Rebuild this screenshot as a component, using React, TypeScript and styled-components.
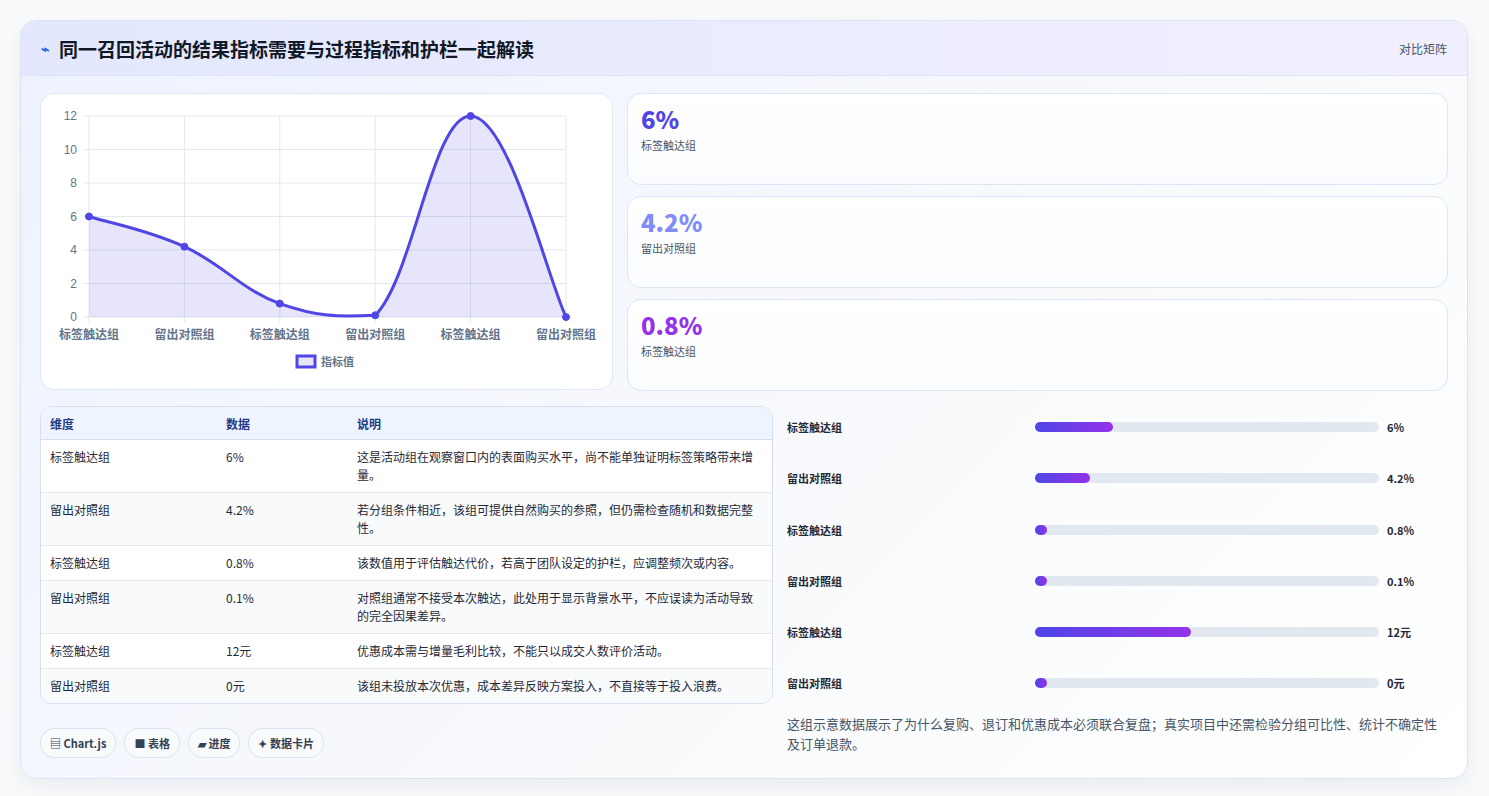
import React from "react";
import styled, { createGlobalStyle } from "styled-components";

const Global = createGlobalStyle`
  body { margin: 0; background: #f8fafc; font-family: "Noto Sans CJK SC", "Noto Sans", sans-serif; }
`;

const Page = styled.div`
  padding: 20px 21px 22px 20px;
  width: 1489px; box-sizing: border-box;
`;
const Card = styled.div`
  border: 1px solid #dbe3f4; border-radius: 16px; overflow: hidden;
  background: linear-gradient(135deg, #eef2ff 0%, #f8fafc 60%, #ffffff 100%);
  box-shadow: 0 8px 20px rgba(15,23,42,0.06);
`;
const Header = styled.div`
  height: 54px; display: flex; align-items: center; justify-content: space-between;
  padding: 0 20px; border-bottom: 1px solid #dde5f5;
  background: linear-gradient(90deg, #e3e8fe, #f1efff);
`;
const Title = styled.h1`
  margin: 0; font-size: 19px; font-weight: 700; color: #111827; display: flex; align-items: center; gap: 10px;
`;
const Icon = styled.span` color: #2563eb; font-size: 14px; `;
const HeadTag = styled.span` font-size: 12px; color: #475569; `;
const Body = styled.div` padding: 17px 19px 20px 19px; display: flex; flex-direction: column; gap: 15px; `;
const Row = styled.div` display: grid; grid-template-columns: 573px 1fr; gap: 14px; `;
const Row2 = styled.div` display: grid; grid-template-columns: 733px 1fr; gap: 14px; `;
const ChartBox = styled.div`
  height: 297px; box-sizing: border-box; background: #fff; border: 1px solid #e2e8f0; border-radius: 14px;
`;
const Stats = styled.div` display: flex; flex-direction: column; gap: 11px; `;
const Stat = styled.div`
  height: 92px; box-sizing: border-box; padding: 11px 13px; border: 1px solid #dde6f5; border-radius: 14px;
  background: linear-gradient(180deg, #ffffff, #fbfcff);
`;
const StatVal = styled.div<{ c: string }>` font-size: 24px; font-weight: 800; color: ${p => p.c}; line-height: 1.2; `;
const StatLbl = styled.div` font-size: 11px; color: #475569; margin-top: 3px; `;
const Left = styled.div` display: flex; flex-direction: column; gap: 24px; `;
const TableWrap = styled.div` border: 1px solid #d8dfea; border-radius: 12px; overflow: hidden; background: #fff; `;
const Table = styled.table`
  width: 100%; border-collapse: collapse; font-size: 12px; color: #1f2937;
  th { background: #eff5ff; color: #1e3a8a; text-align: left; font-weight: 600; height: 32px; padding: 0 9px; border-bottom: 1px solid #d8dfea; }
  td { padding: 8px 9px; vertical-align: top; line-height: 18px; border-bottom: 1px solid #e2e8f0; }
  tr:nth-child(even) td { background: #f8fafc; }
  tr:last-child td { border-bottom: none; }
`;
const Chips = styled.div` display: flex; gap: 8px; `;
const Chip = styled.span`
  font-size: 11px; font-weight: 600; color: #334155; padding: 6px 9px; border: 1px solid #dbe3ee; border-radius: 14px; background: #f8fafc;
`;
const Right = styled.div` display: flex; flex-direction: column; `;
const Bars = styled.div` display: flex; flex-direction: column; padding-top: 13px; `;
const BarRow = styled.div` height: 51.3px; display: grid; grid-template-columns: 248px 344px 1fr; align-items: start; `;
const BarLbl = styled.span` font-size: 11px; color: #1f2937; font-weight: 600; line-height: 16px; `;
const Track = styled.div` height: 10px; margin-top: 3px; background: #e2e8f0; border-radius: 5px; `;
const Fill = styled.div` height: 100%; min-width: 12px; border-radius: 5px; background: linear-gradient(90deg, #4f46e5, #9333ea); `;
const BarVal = styled.span` font-size: 11px; font-weight: 700; color: #1f2937; padding-left: 8px; line-height: 16px; `;
const Note = styled.p` margin: -13px 0 0; font-size: 13px; line-height: 20px; color: #475569; `;

const vals = [6, 4.2, 0.8, 0.1, 12, 0];
const labels = ["标签触达组", "留出对照组", "标签触达组", "留出对照组", "标签触达组", "留出对照组"];
const disp = ["6%", "4.2%", "0.8%", "0.1%", "12元", "0元"];
const notes = [
  "这是活动组在观察窗口内的表面购买水平，尚不能单独证明标签策略带来增量。",
  "若分组条件相近，该组可提供自然购买的参照，但仍需检查随机和数据完整性。",
  "该数值用于评估触达代价，若高于团队设定的护栏，应调整频次或内容。",
  "对照组通常不接受本次触达，此处用于显示背景水平，不应误读为活动导致的完全因果差异。",
  "优惠成本需与增量毛利比较，不能只以成交人数评价活动。",
  "该组未投放本次优惠，成本差异反映方案投入，不直接等于投入浪费。",
];

function LineChart() {
  const x0 = 48, x1 = 525, yTop = 22, yBot = 223;
  const pts = vals.map((v, i) => [x0 + (i * (x1 - x0)) / 5, yBot - (v / 12) * (yBot - yTop)]);
  let d = `M${pts[0][0]},${pts[0][1]}`;
  const t = 0.4;
  for (let i = 0; i < pts.length - 1; i++) {
    const p0 = pts[i - 1] || pts[i], p1 = pts[i], p2 = pts[i + 1], p3 = pts[i + 2] || p2;
    const c1 = [p1[0] + (p2[0] - p0[0]) * t / 2, p1[1] + (p2[1] - p0[1]) * t / 2];
    const c2 = [p2[0] - (p3[0] - p1[0]) * t / 2, p2[1] - (p3[1] - p1[1]) * t / 2];
    d += ` C${c1[0]},${Math.min(c1[1], yBot)} ${c2[0]},${Math.min(c2[1], yBot)} ${p2[0]},${p2[1]}`;
  }
  const area = d + ` L${x1},${yBot} L${x0},${yBot} Z`;
  return (
    <svg width="571" height="295" style={{ display: "block" }}>
      {[0, 2, 4, 6, 8, 10, 12].map(v => {
        const y = yBot - (v / 12) * (yBot - yTop);
        return <g key={v}>
          <line x1={x0 - 5} x2={x1} y1={y} y2={y} stroke="#e5e7ef" />
          <text x={x0 - 12} y={y + 4} textAnchor="end" fontSize="12" fill="#64748b" fontFamily="Liberation Sans, sans-serif">{v}</text>
        </g>;
      })}
      {pts.map((p, i) => <g key={i}>
        <line x1={p[0]} x2={p[0]} y1={yTop} y2={yBot + 5} stroke="#e5e7ef" />
        <text x={p[0]} y={yBot + 22} textAnchor="middle" fontSize="12" fontWeight="600" fill="#64748b">{labels[i]}</text>
      </g>)}
      <path d={area} fill="rgba(79,70,229,0.14)" />
      <path d={d} fill="none" stroke="#4f46e5" strokeWidth="3" />
      {pts.map((p, i) => <circle key={i} cx={p[0]} cy={p[1]} r="3.5" fill="#4f46e5" stroke="#4f46e5" strokeWidth="1" />)}
      <rect x="256" y="262" width="18" height="11" fill="rgba(79,70,229,0.14)" stroke="#4f46e5" strokeWidth="3" />
      <text x="280" y="272" fontSize="11" fontWeight="600" fill="#64748b">指标值</text>
    </svg>
  );
}

export default function App() {
  return (
    <Page>
      <Global />
      <Card>
        <Header>
          <Title><Icon>⌁</Icon>同一召回活动的结果指标需要与过程指标和护栏一起解读</Title>
          <HeadTag>对比矩阵</HeadTag>
        </Header>
        <Body>
          <Row>
            <ChartBox><LineChart /></ChartBox>
            <Stats>
              <Stat><StatVal c="#4f46e5">6%</StatVal><StatLbl>标签触达组</StatLbl></Stat>
              <Stat><StatVal c="#818cf8">4.2%</StatVal><StatLbl>留出对照组</StatLbl></Stat>
              <Stat><StatVal c="#9333ea">0.8%</StatVal><StatLbl>标签触达组</StatLbl></Stat>
            </Stats>
          </Row>
          <Row2>
            <Left>
              <TableWrap>
                <Table>
                  <thead><tr><th style={{ width: 158 }}>维度</th><th style={{ width: 113 }}>数据</th><th>说明</th></tr></thead>
                  <tbody>
                    {labels.map((l, i) => <tr key={i}><td>{l}</td><td>{disp[i]}</td><td>{notes[i]}</td></tr>)}
                  </tbody>
                </Table>
              </TableWrap>
              <Chips>
                <Chip>▤ Chart.js</Chip><Chip>■ 表格</Chip><Chip>▰ 进度</Chip><Chip>✦ 数据卡片</Chip>
              </Chips>
            </Left>
            <Right>
              <Bars>
                {labels.map((l, i) => <BarRow key={i}>
                  <BarLbl>{l}</BarLbl>
                  <Track><Fill style={{ width: `${(vals[i] / 26.5) * 100}%` }} /></Track>
                  <BarVal>{disp[i]}</BarVal>
                </BarRow>)}
              </Bars>
              <Note>这组示意数据展示了为什么复购、退订和优惠成本必须联合复盘；真实项目中还需检验分组可比性、统计不确定性及订单退款。</Note>
            </Right>
          </Row2>
        </Body>
      </Card>
    </Page>
  );
}
